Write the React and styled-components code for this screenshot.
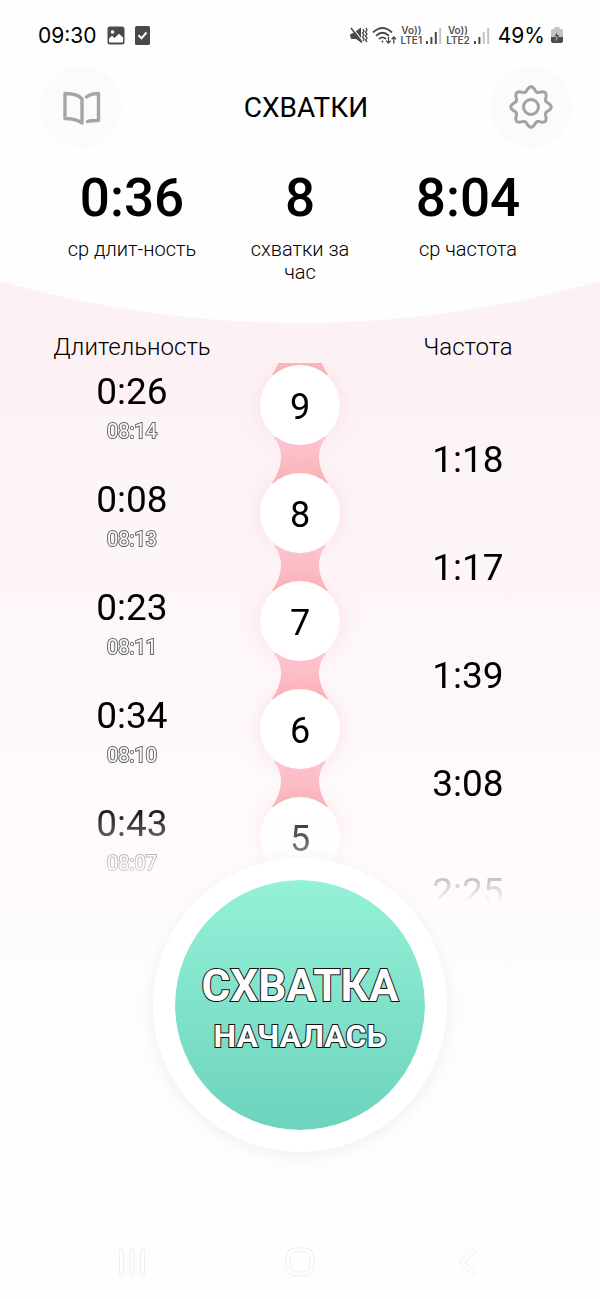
import React from 'react';
import styled, { createGlobalStyle } from 'styled-components'

const GlobalStyle = createGlobalStyle`
    * {
        box-sizing: border-box;
    }
    body {
        margin: 0;
        background: #fefefe;
        font-family: Roboto, "Liberation Sans", sans-serif;
        color: #000;
    }
    button {
        padding: 0;
        border: 0;
        background: none;
        font-family: inherit;
        cursor: pointer;
    }
`

const Page = styled.div`
    display: flex;
    flex-direction: column;
    min-height: 100vh;
    overflow: hidden;
    background: linear-gradient(#fcf1f4 280px, #fdf5f8 560px, #fefafb 840px, #fefefe 1140px);
`
const Hero = styled.header`
    height: 323px;
    background: #fefefe;
    clip-path: circle(1092px at 50% calc(100% - 1092px));
`
const StatusBar = styled.div`
    display: flex;
    align-items: center;
    justify-content: space-between;
    height: 66px;
    padding: 4px 37px 0 38px;
    font-family: Inter, sans-serif;
    font-size: 21px;
`
const StatusGroup = styled.div`
    display: flex;
    align-items: center;
    gap: ${props => props.$gap}px;
`
const Battery = styled(StatusGroup)`
    padding-left: 4px;
`
const Network = styled.span`
    display: flex;
    flex-direction: column;
    align-items: center;
    font-size: 10px;
    font-weight: 600;
    line-height: 10px;
    color: #555;
`
const TopBar = styled.div`
    display: flex;
    align-items: center;
    justify-content: space-between;
    padding: 0 28px 0 40px;
`
const RoundButton = styled.button`
    display: flex;
    align-items: center;
    justify-content: center;
    width: 82px;
    height: 82px;
    border-radius: 50%;
    background: #fbfbfd;
`
const Title = styled.h1`
    margin: 0;
    font-size: 28px;
    font-weight: 400;
`
const Columns = styled.div`
    display: grid;
    grid-template-columns: repeat(3, minmax(0, 1fr));
    padding: 0 48px;
    text-align: center;
`
const Stats = styled(Columns)`
    padding-top: 18px;
`
const Stat = styled.div`
    padding: 0 18px;
    font-size: 20px;
    font-weight: 300;
    line-height: 23px;
`
const StatValue = styled.div`
    margin: 0 -18px 8px;
    font-size: 53px;
    font-weight: 500;
    line-height: 64px;
`
const Headings = styled(Columns)`
    padding-top: 8px;
    font-size: 24px;
    font-weight: 300;
    line-height: 32px;
`
const Timeline = styled.ul`
    margin: 0;
    padding: 2px 0 0;
    list-style: none;
    overflow: hidden;
    isolation: isolate;
    mask-image: linear-gradient(
        #000 calc(100% - 105px),
        rgba(0, 0, 0, .24) calc(100% - 28px),
        rgba(0, 0, 0, .04) calc(100% - 6px),
        transparent calc(100% - 5px)
    );
`
const Row = styled(Columns).attrs({ as: 'li' })`
    height: 108px;
`
const Duration = styled.div`
    padding-top: 5px;
    font-size: 37px;
    line-height: 44px;
`
const StartedAt = styled.div`
    margin-top: 5px;
    font-size: 20px;
    line-height: 24px;
    color: #fff;
    -webkit-text-stroke: 2px #666;
    paint-order: stroke fill;
`
const Interval = styled.div`
    align-self: end;
    font-size: 37px;
    line-height: 26px;
`
const Bead = styled.div`
    position: relative;
    justify-self: center;
    width: 80px;
    height: 80px;
    border-radius: 50%;
    background: #fff;
    box-shadow: 0 0 20px rgba(255, 170, 185, .28);
    font-size: 36px;
    line-height: 84px;
`
// sits behind all the beads and reaches up to the previous one
const Link = styled.svg`
    position: absolute;
    z-index: -1;
    left: 12px;
    top: -36px;
`
const BeadCell = styled.div`
    display: grid;
`
const StartButton = styled.button`
    position: relative;
    align-self: center;
    width: 294px;
    height: 294px;
    margin-top: -47px;
    padding-top: 6px;
    border: 22px solid #fff;
    border-radius: 50%;
    background: linear-gradient(#94f1d7, #6dd3bd) padding-box;
    box-shadow: 0 4px 18px rgba(0, 0, 0, .06);
    color: #fff;
    font-size: 44px;
    font-weight: 700;
    line-height: 56px;
    -webkit-text-stroke: 2px #111;
    paint-order: stroke fill;
`
const StartNote = styled.span`
    display: block;
    font-size: 32px;
    line-height: 44px;
`
const NavBar = styled(Columns).attrs({ as: 'nav' })`
    margin-top: auto;
    height: 74px;
`
const NavButton = styled.button`
    display: flex;
    align-items: center;
    justify-content: center;
`

const contractions = [
    { number: 9, duration: '0:26', time: '08:14', interval: '1:18' },
    { number: 8, duration: '0:08', time: '08:13', interval: '1:17' },
    { number: 7, duration: '0:23', time: '08:11', interval: '1:39' },
    { number: 6, duration: '0:34', time: '08:10', interval: '3:08' },
    { number: 5, duration: '0:43', time: '08:07', interval: '2:25' },
]

const gearPoints = Array.from({ length: 144 }, (_, i) => {
    const angle = i * Math.PI / 72
    const radius = 18 + 2.2 * Math.cos(8 * angle)
    return `${(23 + radius * Math.cos(angle)).toFixed(2)},${(23 + radius * Math.sin(angle)).toFixed(2)}`
}).join(' ')

const GearIcon = () => (
    <svg width="46" height="46" fill="none" stroke="#a3a1a2" strokeWidth="3" strokeLinejoin="round">
        <polygon points={gearPoints} />
        <circle cx="23" cy="23" r="7.5" />
    </svg>
)

const BookIcon = () => (
    <svg width="40" height="36" fill="none" stroke="#a8a4a5" strokeWidth="3.4" strokeLinecap="round" strokeLinejoin="round">
        <path d="M4 4.5V29.5C11 29.5 16 30.5 21 34V10C18 6 12 4.5 4 4.5Z" />
        <path d="M25.5 8C28.5 5.5 33 4.5 37.5 4.5V31.5C33 31.5 29.5 31.5 26.5 32.5" />
    </svg>
)

const ImageIcon = () => (
    <svg width="18" height="19" viewBox="0 0 18 19">
        <rect x=".5" y=".5" width="17" height="18" rx="2.5" fill="#4a4a4a" />
        <circle cx="5.5" cy="6" r="1.8" fill="#fff" />
        <path d="M2 15.5V12.5L5 9.8L7.5 12L12 7.8L16 11.5V15.5Q16 16.5 15 16.5H3Q2 16.5 2 15.5Z" fill="#fff" />
    </svg>
)

const CheckIcon = () => (
    <svg width="15" height="19" viewBox="0 0 15 19">
        <rect width="15" height="19" rx="1.5" fill="#4a4a4a" />
        <path d="M3.5 9.3L6.5 12.3L11.5 6.5" fill="none" stroke="#fff" strokeWidth="2" />
    </svg>
)

const MuteIcon = () => (
    <svg width="18" height="18" viewBox="0 0 18 18">
        <path d="M0 8.5L4 6.5L11 1.5V16.5L6 13H1.5Q0 12 0 8.5Z" fill="#4a4a4a" />
        <path d="M2 1L13 15.5" stroke="#fff" strokeWidth="1.2" />
        <path d="M1 2L12 16.5" stroke="#4a4a4a" strokeWidth="1.6" />
        <path d="M13 3L14 5L12.5 7L14 9L12.5 11L14 13L13 15M16 2L17 4L15.5 6L17 8L15.5 10L17 12L15.5 14L17 16" fill="none" stroke="#4a4a4a" strokeWidth="1.3" />
    </svg>
)

const WifiIcon = () => (
    <svg width="25" height="19" viewBox="0 0 25 19" fill="none" stroke="#4a4a4a" strokeWidth="1.8">
        <path d="M1 6.5Q10.5-2.5 20 6.5" />
        <path d="M4 9.8Q10.5 3.8 17 9.8" />
        <path d="M7 13Q10.5 9.8 14 13" />
        <circle cx="10.5" cy="15.5" r="1" fill="#4a4a4a" stroke="none" />
        <path d="M16.5 11V17M14.3 14.8L16.5 17L18.7 14.8M21.8 17.5V11M19.6 13.2L21.8 11L24 13.2" strokeWidth="1.3" />
    </svg>
)

const SignalIcon = ({ bars }) => (
    <svg width="16" height="17" viewBox="0 0 16 17">
        {[3, 7, 12, 16].map((height, i) => (
            <rect
                key={height}
                x={i * 4.4}
                y={17 - height}
                width="2"
                height={height}
                fill={i < bars ? '#4a4a4a' : '#c4c4c4'}
            />
        ))}
    </svg>
)

const BatteryIcon = () => (
    <svg width="12" height="18" viewBox="0 0 12 18">
        <path d="M3.5 1H8.5V3H10.5Q12 3 12 4.5V11H0V4.5Q0 3 1.5 3H3.5Z" fill="#c4c4c4" />
        <path d="M0 11H12V15Q12 17 10 17H2Q0 17 0 15Z" fill="#4a4a4a" />
        <path d="M6.5 5.5L3 10.5H5.5L5 14.5L9 9H6.5Z" fill="#4a4a4a" stroke="#ddd" strokeWidth=".5" />
    </svg>
)

const App = () => {
    return (
        <Page>
            <GlobalStyle />
            <Hero>
                <StatusBar>
                    <StatusGroup $gap={10}>
                        <span>09:30</span>
                        <ImageIcon />
                        <CheckIcon />
                    </StatusGroup>
                    <StatusGroup $gap={4}>
                        <MuteIcon />
                        <WifiIcon />
                        <Network><span>Vo))</span><span>LTE1</span></Network>
                        <SignalIcon bars={3} />
                        <Network><span>Vo))</span><span>LTE2</span></Network>
                        <SignalIcon bars={2} />
                        <Battery $gap={6}>
                            <span>49%</span>
                            <BatteryIcon />
                        </Battery>
                    </StatusGroup>
                </StatusBar>
                <TopBar>
                    <RoundButton aria-label="Справка"><BookIcon /></RoundButton>
                    <Title>СХВАТКИ</Title>
                    <RoundButton aria-label="Настройки"><GearIcon /></RoundButton>
                </TopBar>
                <Stats>
                    <Stat>
                        <StatValue>0:36</StatValue>
                        ср длит-ность
                    </Stat>
                    <Stat>
                        <StatValue>8</StatValue>
                        схватки за час
                    </Stat>
                    <Stat>
                        <StatValue>8:04</StatValue>
                        ср частота
                    </Stat>
                </Stats>
            </Hero>
            <Headings>
                <span>Длительность</span>
                <span />
                <span>Частота</span>
            </Headings>
            <Timeline>
                {contractions.map(item => (
                    <Row key={item.number}>
                        <div>
                            <Duration>{item.duration}</Duration>
                            <StartedAt>{item.time}</StartedAt>
                        </div>
                        <BeadCell>
                            <Bead>
                                <Link width="56" height="46" viewBox="0 0 56 46">
                                    <defs>
                                        <linearGradient id={`link${item.number}`} x1="0" y1="0" x2="0" y2="1">
                                            <stop offset="0" stopColor="#fdc8d6" />
                                            <stop offset="1" stopColor="#fab3b3" />
                                        </linearGradient>
                                    </defs>
                                    <path d="M2 0Q17 20 0 46H56Q39 20 54 0Z" fill={`url(#link${item.number})`} />
                                </Link>
                                {item.number}
                            </Bead>
                        </BeadCell>
                        <Interval>{item.interval}</Interval>
                    </Row>
                ))}
            </Timeline>
            <StartButton>
                СХВАТКА
                <StartNote>НАЧАЛАСЬ</StartNote>
            </StartButton>
            <NavBar>
                <NavButton aria-label="Недавние">
                    <svg width="28" height="30" fill="none" stroke="#efefef">
                        <rect x="1.5" y="1.5" width="4" height="27" rx="2" />
                        <rect x="12" y="1.5" width="4" height="27" rx="2" />
                        <rect x="22.5" y="1.5" width="4" height="27" rx="2" />
                    </svg>
                </NavButton>
                <NavButton aria-label="Домой">
                    <svg width="30" height="30" fill="none" stroke="#efefef">
                        <rect x="1" y="1" width="28" height="28" rx="9" />
                        <rect x="5" y="5" width="20" height="20" rx="5.5" />
                    </svg>
                </NavButton>
                <NavButton aria-label="Назад">
                    <svg width="22" height="30" fill="none" stroke="#efefef" strokeLinejoin="round">
                        <path d="M16.5 1.5L2 15L16.5 28.5L19.5 26L8 15L19.5 4Z" />
                    </svg>
                </NavButton>
            </NavBar>
        </Page>
    )
}

export default App
